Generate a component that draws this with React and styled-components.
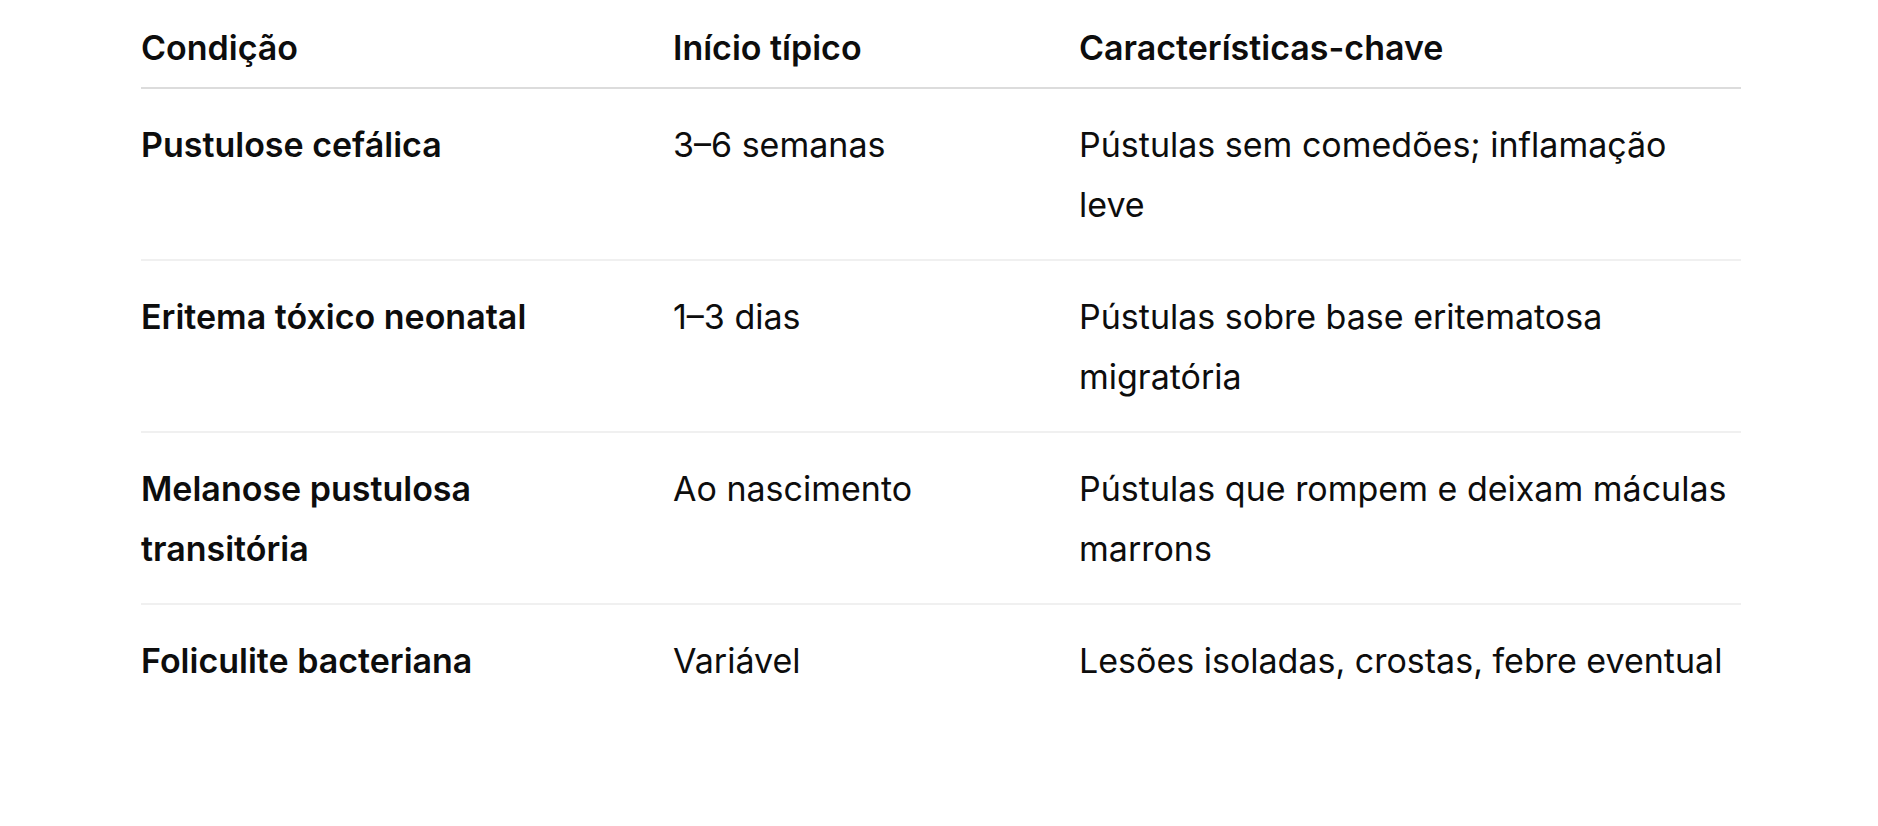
import React from "react";
import styled, { createGlobalStyle } from "styled-components";

const GlobalStyle = createGlobalStyle`
  body {
    margin: 0;
    background: #ffffff;
    font-family: Inter, "Liberation Sans", sans-serif;
    color: #0d0d0d;
  }
`;

const rows = [
  ["Pustulose cefálica", "3–6 semanas", "Pústulas sem comedões; inflamação leve"],
  ["Eritema tóxico neonatal", "1–3 dias", "Pústulas sobre base eritematosa migratória"],
  ["Melanose pustulosa transitória", "Ao nascimento", "Pústulas que rompem e deixam máculas marrons"],
  ["Foliculite bacteriana", "Variável", "Lesões isoladas, crostas, febre eventual"],
];

const App = () => {
  return (
    <Page>
      <GlobalStyle />
      <Table>
        <HeadRow>
          <HeadCell>Condição</HeadCell>
          <HeadCell>Início típico</HeadCell>
          <HeadCell>Características-chave</HeadCell>
        </HeadRow>
        {rows.map((row, i) => (
          <Row key={row[0]} last={i === rows.length - 1}>
            <Cell bold>{row[0]}</Cell>
            <Cell>{row[1]}</Cell>
            <Cell>{row[2]}</Cell>
          </Row>
        ))}
      </Table>
    </Page>
  );
};

export default App;

const Page = styled.div`
  padding: 18px 137px 0 141px;
`;

const Table = styled.div`
  width: 1600px;
  font-size: 34px;
  line-height: 60px;
`;

const HeadRow = styled.div`
  display: grid;
  grid-template-columns: 532px 406px 1fr;
  border-bottom: 2px solid #dcdcdc;
  padding-bottom: 9px;
`;

const HeadCell = styled.div`
  font-weight: 600;
  padding-right: 48px;
  &:last-child {
    padding-right: 10px;
  }
`;

const Row = styled.div`
  display: grid;
  grid-template-columns: 532px 406px 1fr;
  padding: 26px 0 24px;
  border-bottom: ${(p) => (p.last ? "none" : "2px solid #f0f0f0")};
`;

const Cell = styled.div`
  font-weight: ${(p) => (p.bold ? 600 : 400)};
  padding-right: 48px;
  &:last-child {
    padding-right: 10px;
  }
`;
